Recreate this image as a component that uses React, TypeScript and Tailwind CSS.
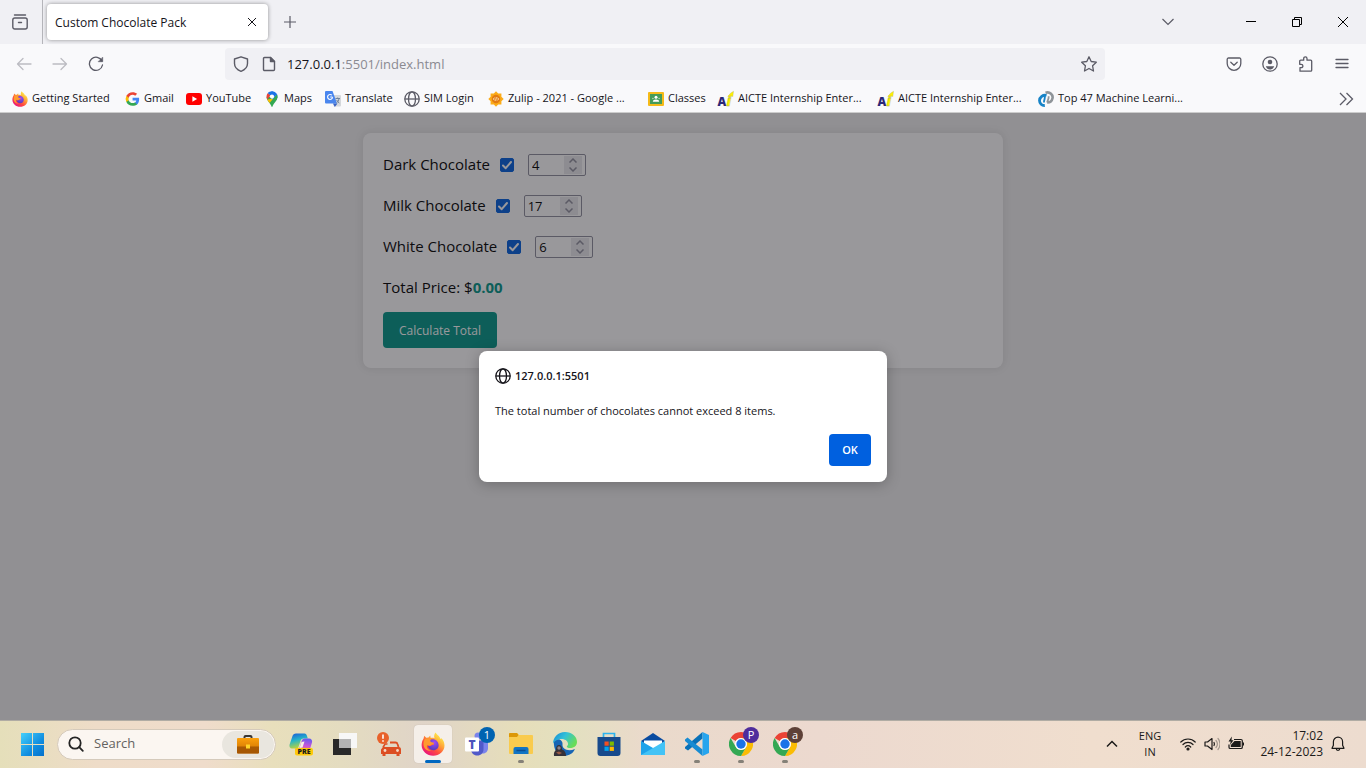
import React, { useId, useState } from "react";

type IconProps = { className?: string };

function FirefoxLogo({ className }: IconProps) {
  const id = useId();
  return (
    <svg viewBox="0 0 24 24" className={className} aria-hidden="true">
      <defs>
        <linearGradient id={id + "a"} x1="0.85" y1="0.1" x2="0.2" y2="0.95">
          <stop offset="0" stopColor="#fff44f" />
          <stop offset="0.35" stopColor="#ffa436" />
          <stop offset="0.65" stopColor="#ff4b3e" />
          <stop offset="1" stopColor="#e8127f" />
        </linearGradient>
        <radialGradient id={id + "b"} cx="0.6" cy="0.3" r="0.8">
          <stop offset="0" stopColor="#a14bf5" />
          <stop offset="1" stopColor="#4a3bb5" />
        </radialGradient>
      </defs>
      <path
        fill={`url(#${id}a)`}
        d="M14.500.500c1 2 3.200 2.800 4.300 4.900.6 1.100.7 1.700.7 1.700l1.100-.9c2 2.200 2.900 4.800 2.900 7.300 0 6-5.100 10.200-11.300 10.200S.6 19.200.6 13c0-3 1.200-5.200 2-6.500l.6-2.700 2 1.900 2.300-.1L9.200 3.500l.5 2.500C11 5.600 12.600 5.800 13.500 6.200 12.800 4 13.300 1.800 14.500.5z"
      />
      <path fill={`url(#${id}b)`} d="M8.300 8.200c2.700-2.200 8.800-.9 9.300 4.500.3 3.200-2.200 5.500-5.200 5.500-3.100 0-5.300-2.200-5.400-4.700 1.200.9 2.900.7 3.700-.3l2.300-.8c.3-.7-.3-1.100-1.100-1.100L9.900 11z" />
      <path fill="#ff9a2e" d="M4 6.900c1.700-.9 3.500-.6 4.600.3l1.600-.2c-.6 1-1.100 1.600-.8 2.600.4.9 2.200.9 3.400 1 .2 1.200-1.200 1.300-2.100 2-1.200 1-2.300 1.600-4.200.5-1.800 1.700.6 5.300 3.800 5.600-4 .9-7.900-2-7.800-6.700C2.500 9.900 3 8.200 4 6.900z" />
    </svg>
  );
}

function ChromeLogo() {
  return (
    <svg viewBox="0 0 24 24" className="size-6" aria-hidden="true">
      <path fill="#ea4335" d="M12 0a12 12 0 0 1 10.400 6H12a6 6 0 0 0-5.200 3L1.600 6A12 12 0 0 1 12 0z" />
      <path fill="#fbbc04" d="M22.400 6A12 12 0 0 1 12 24l5.200-9a6 6 0 0 0 0-6L12 6z" />
      <path fill="#34a853" d="M1.600 6l5.200 9A6 6 0 0 0 17.200 15L12 24A12 12 0 0 1 1.600 6z" />
      <circle cx="12" cy="12" r="6" fill="#fff" />
      <circle cx="12" cy="12" r="4.700" fill="#1a73e8" />
    </svg>
  );
}

function Globe({ className }: IconProps) {
  return (
    <svg viewBox="0 0 16 16" className={className} fill="none" stroke="currentColor" strokeWidth="1.300" aria-hidden="true">
      <circle cx="8" cy="8" r="7.200" />
      <ellipse cx="8" cy="8" rx="3.500" ry="7.200" />
      <path d="M.8 8h14.400" />
    </svg>
  );
}

function GoogleG() {
  return (
    <svg viewBox="-3 -2 28 28" className="size-4" aria-hidden="true">
      <path fill="#4285f4" d="M23.500 12.300c0-.9-.1-1.500-.2-2.300H12v4.500h6.500c-.3 1.600-1.200 3-2.500 3.900v3.100h4c2.300-2.200 3.500-5.300 3.500-9.200z" />
      <path fill="#34a853" d="M12 24c3.200 0 6-1.100 8-2.900l-4-3.100c-1 .7-2.400 1.200-4 1.200-3.100 0-5.800-2.100-6.700-5H1.200v3.200A12 12 0 0 0 12 24z" />
      <path fill="#fbbc05" d="M5.300 14.200a7.200 7.200 0 0 1 0-4.600V6.500H1.200a12 12 0 0 0 0 10.800z" />
      <path fill="#ea4335" d="M12 4.700c1.800 0 3.300.6 4.600 1.800L20 3C18 1.100 15.200 0 12 0 7.300 0 3.200 2.700 1.200 6.500l4.100 3.100c.9-2.800 3.600-4.900 6.700-4.900z" />
    </svg>
  );
}

function YouTubeLogo() {
  return (
    <svg viewBox="0 0 16 16" className="size-4" aria-hidden="true">
      <rect x="0" y="2" width="16" height="12" rx="3" fill="#f00" />
      <path d="M6.400 5.200v5.600l4.700-2.800z" fill="#fff" />
    </svg>
  );
}

function MapsPin() {
  return (
    <svg viewBox="0 0 16 16" className="size-4" aria-hidden="true">
      <path fill="#34a853" d="M8 16c-.5 0-.6-.6-.9-1.400C6.300 12.500 2.500 9.500 2.500 5.800L13.500 5.800C13.500 9.500 9.700 12.500 8.900 14.600 8.600 15.400 8.500 16 8 16z" />
      <path fill="#fbbc04" d="M3.300 8.400 9.800 7.500 5.700 12C4.600 10.600 3.700 9.500 3.300 8.400z" />
      <path fill="#4285f4" d="M7.600 0.100 13 3.300c.4.800.5 1.600.5 2.500L12.600 9 8 8z" />
      <path fill="#34a853" d="M13 3.300c1 2.200.3 4.400-.9 6.100L5.700 12l6-7.200z" />
      <path fill="#1a73e8" d="M3.700 2.200C5.900-.5 10.900-.6 13 3.300L9.500 6 5.500 4z" />
      <path fill="#ea4335" d="M3.700 2.200 6.500 4.500 3.300 8.400C2.100 6.200 2.400 3.600 3.700 2.200z" />
      <circle cx="8" cy="5.600" r="2.100" fill="#fff" />
    </svg>
  );
}

function TranslateLogo() {
  return (
    <svg viewBox="0 0 16 16" className="size-4" aria-hidden="true">
      <path d="M6 4h9a1 1 0 0 1 1 1v9.500a1 1 0 0 1-1 1H9z" fill="#d5d8dc" />
      <path d="M8 12.500h4.500L9.800 16z" fill="#3a62c4" />
      <path d="M1 0h6.500L12 12.500H1a1 1 0 0 1-1-1V1a1 1 0 0 1 1-1z" fill="#4a86ee" />
      <path d="M7.500 6H5.200M6.900 4.200a2.500 2.500 0 1 0 .7 2" stroke="#fff" strokeWidth="1.100" fill="none" />
      <path d="M10.500 7.500h4.500M12.700 6.500v1M14 7.500c-.3 2-1.200 3.500-2.500 4.500M11.700 9c.5 1.300 1.400 2.300 2.600 3" stroke="#71839a" fill="none" />
    </svg>
  );
}

function ZulipLogo() {
  return (
    <svg viewBox="0 0 16 16" className="size-4" aria-hidden="true">
      <path fill="#fbab18" d="m8 .3 2.200 2.300h3.200v3.200L15.700 8l-2.300 2.200v3.200h-3.200L8 15.700l-2.200-2.300H2.600v-3.200L.3 8l2.300-2.200V2.600h3.200z" />
      <circle cx="8" cy="8" r="4.300" fill="#e37b12" />
      <path d="M6.800 6.500 5.300 8l1.500 1.500M9.200 6.500 10.700 8 9.200 9.500M8.400 6.300l-.8 3.400" stroke="#fff3d6" strokeWidth=".8" fill="none" />
    </svg>
  );
}

function ClassroomLogo() {
  return (
    <svg viewBox="0 0 16 16" className="size-4" aria-hidden="true">
      <rect y="1" width="16" height="14" rx="1" fill="#f5ba18" />
      <rect x="2" y="3" width="12" height="10" fill="#459b59" />
      <circle cx="8" cy="6.200" r="1.500" fill="#fff" />
      <path d="M4.800 10.800c0-1.500 1.500-2.300 3.200-2.300s3.200.8 3.200 2.300z" fill="#fff" />
      <circle cx="4.900" cy="7.500" r=".8" fill="#b5d8bd" />
      <circle cx="11.100" cy="7.500" r=".8" fill="#b5d8bd" />
    </svg>
  );
}

function AicteLogo() {
  return (
    <svg viewBox="0 0 16 16" className="size-4 overflow-visible" aria-hidden="true">
      <text x="-0.500" y="15" fontSize="12" fontWeight="800" fill="#2b2777">A</text>
      <text x="8.500" y="15" fontSize="14" fontWeight="800" fontStyle="italic" fill="#f7ee00" stroke="#a9a64a" strokeWidth=".3">i</text>
      <path d="M10 5.500 12.500 2.200 15.500.3 14.800 5.500 12.500 4.700 10.500 6.400z" fill="#fff200" stroke="#b8b566" strokeWidth=".4" />
    </svg>
  );
}

function TopLogo() {
  return (
    <svg viewBox="0 0 16 16" className="size-4" fill="none" aria-hidden="true">
      <path d="M7.500 1.700C12 .3 15.300 3.800 14.500 7.300c-.6 2.800-2.800 4.300-5.300 4.200" stroke="#8e9499" strokeWidth="2.600" />
      <path d="M10.500 5.200c.8 2.300-.8 3.600-1.300 6.300" stroke="#8e9499" strokeWidth="1.800" />
      <path d="M8.500 4.500C5 3.500 1.600 6.300 1.500 9.600c0 3 2.500 5.100 5.300 4.900" stroke="#1683c7" strokeWidth="2.800" />
      <path d="M6.600 5c1 2.500-.8 3.500-.6 6.500" stroke="#1683c7" strokeWidth="1.800" />
    </svg>
  );
}

const bookmarks: { label: string; width: string; icon: React.ReactNode }[] = [
  { label: "Getting Started", width: "w-28", icon: <FirefoxLogo className="size-4" /> },
  { label: "Gmail", width: "w-[62px]", icon: <GoogleG /> },
  { label: "YouTube", width: "w-[78px]", icon: <YouTubeLogo /> },
  { label: "Maps", width: "w-[61px]", icon: <MapsPin /> },
  { label: "Translate", width: "w-[79px]", icon: <TranslateLogo /> },
  { label: "SIM Login", width: "w-[84px]", icon: <Globe className="size-4 text-[#5b5b66]" /> },
  { label: "Zulip - 2021 - Google ...", width: "w-40", icon: <ZulipLogo /> },
  { label: "Classes", width: "w-[70px]", icon: <ClassroomLogo /> },
  { label: "AICTE Internship Enter...", width: "w-40", icon: <AicteLogo /> },
  { label: "AICTE Internship Enter...", width: "w-40", icon: <AicteLogo /> },
  { label: "Top 47 Machine Learni...", width: "w-40", icon: <TopLogo /> },
];

function ToolButton({ label, dim, children }: { label: string; dim?: boolean; children: React.ReactNode }) {
  return (
    <button aria-label={label} className={dim ? "flex h-8 w-9 items-center justify-center text-[#bcbcc2]" : "flex h-8 w-9 items-center justify-center text-[#5b5b66]"}>
      <svg viewBox="0 0 16 16" className="size-4" fill="none" stroke="currentColor" strokeWidth="1.300" strokeLinecap="round" strokeLinejoin="round">
        {children}
      </svg>
    </button>
  );
}

function TabStrip() {
  return (
    <div className="flex h-11 items-center bg-[#f0f0f4]">
      <button aria-label="Recent browsing" className="flex h-11 w-[42px] items-center justify-center pr-0.5 text-[#5b5b66]">
        <svg viewBox="0 0 16 16" className="size-4" fill="none" stroke="currentColor" strokeWidth="1.400" strokeLinecap="round">
          <path d="M2.500 1h11M6.500 8.500h3" />
          <rect x=".8" y="4" width="14.400" height="11" rx="2" />
        </svg>
      </button>
      <div className="h-11 w-px bg-[#b5b5ba]" />
      <div className="ml-1 flex h-9 w-[221px] items-center justify-between rounded bg-white px-2 shadow-[0_0_4px_rgba(0,0,0,0.4)]">
        <span className="pt-0.5 text-[12px] text-[#15141a]">Custom Chocolate Pack</span>
        <button aria-label="Close tab" className="flex size-4 items-center justify-center text-[#15141a]">
          <svg viewBox="0 0 10 10" className="size-2.5" stroke="currentColor" fill="none">
            <path d="m1 1 8 8M9 1 1 9" />
          </svg>
        </button>
      </div>
      <button aria-label="New tab" className="ml-1 flex size-9 items-center justify-center text-[#5b5b66]">
        <svg viewBox="0 0 12 12" className="size-3" stroke="currentColor" strokeWidth="1.200">
          <path d="M6 0v12M0 6h12" />
        </svg>
      </button>
      <div className="flex-1" />
      <button aria-label="List all tabs" className="mr-[42px] flex size-9 items-center justify-center text-[#5b5b66]">
        <svg viewBox="0 0 12 12" className="size-3" fill="none" stroke="currentColor" strokeWidth="1.200">
          <path d="m.5 3 5.500 5.500L11.500 3" />
        </svg>
      </button>
      <div className="flex text-black">
        <button aria-label="Minimize" className="flex h-11 w-[46px] items-center justify-center">
          <svg viewBox="0 0 10 10" className="size-2.5" stroke="currentColor"><path d="M0 4.500h10" /></svg>
        </button>
        <button aria-label="Restore" className="flex h-11 w-[46px] items-center justify-center">
          <svg viewBox="0 0 10 10" className="size-2.5" stroke="currentColor" fill="none"><path d="M.5 2.500h7v7h-7zM2.500 2.500v-2h7v7h-2" /></svg>
        </button>
        <button aria-label="Close window" className="flex h-11 w-[46px] items-center justify-center">
          <svg viewBox="0 0 10 10" className="size-2.5" stroke="currentColor"><path d="m0 0 10 10M10 0 0 10" /></svg>
        </button>
      </div>
    </div>
  );
}

function Toolbar() {
  return (
    <div className="flex h-10 items-center px-1.5">
      <ToolButton label="Back" dim><path d="M15 8H1.500M7 2.500 1.500 8 7 13.500" /></ToolButton>
      <ToolButton label="Forward" dim><path d="M1 8h13.500M9 2.500 14.500 8 9 13.500" /></ToolButton>
      <ToolButton label="Reload">
        <path d="M14 5A6.600 6.600 0 1 0 14.500 9" />
        <path d="M14.700 1.500v4.200h-4.200z" fill="currentColor" strokeWidth=".6" />
      </ToolButton>
      <div className="mx-auto flex h-8 w-full max-w-[880px] items-center rounded bg-[#f0f0f4] px-2 text-[#5b5b66]">
        <svg viewBox="0 0 16 16" className="size-4" fill="none" stroke="currentColor" strokeWidth="1.400" strokeLinejoin="round">
          <path d="M8 .8 14.500 3v4.500c0 3.800-3.200 6.500-6.500 7.800C4.700 14 1.500 11.300 1.500 7.500V3z" />
        </svg>
        <svg viewBox="0 0 16 16" className="ml-3 size-4" fill="none" stroke="currentColor" strokeWidth="1.400" strokeLinejoin="round">
          <path d="M3.500 1.500h6l4 4v8a1 1 0 0 1-1 1h-9a1 1 0 0 1-1-1v-11a1 1 0 0 1 1-1z" />
          <path d="M9.500 1.500v4h4z" fill="currentColor" />
        </svg>
        <a href="http://127.0.0.1:5501/index.html" className="ml-2.5 flex-1 pt-px text-[13px] text-[#8a8a91]">
          <span className="text-[#15141a]">127.0.0.1</span>:5501/index.html
        </a>
        <button aria-label="Bookmark this page">
          <svg viewBox="0 0 16 16" className="size-4" fill="none" stroke="currentColor" strokeWidth="1.300" strokeLinejoin="round">
            <path d="m8 .8 2.200 4.700 5.100.7-3.700 3.600.9 5.200L8 12.500 3.500 15l.9-5.200L.7 6.200l5.100-.7z" />
          </svg>
        </button>
      </div>
      <ToolButton label="Save to Pocket">
        <path d="M2.500 2h11a1.300 1.300 0 0 1 1.300 1.300V7.500a6.800 6.800 0 0 1-13.600 0V3.300A1.300 1.300 0 0 1 2.500 2z" />
        <path d="m4.800 6.300 3.200 3 3.200-3" />
      </ToolButton>
      <ToolButton label="Account">
        <circle cx="8" cy="8" r="7.200" />
        <circle cx="8" cy="6" r="2.300" fill="currentColor" stroke="none" />
        <path d="M3.800 10.200h8.400c-.6 2-2.300 3.300-4.200 3.300s-3.600-1.300-4.200-3.300z" fill="currentColor" stroke="none" />
      </ToolButton>
      <ToolButton label="Extensions">
        <path d="M2 15.200v-3.500h1.200a1.700 1.700 0 0 0 0-3.400H1.700V5.200a1 1 0 0 1 1-1h3V2.500a1.600 1.600 0 0 1 3.300 0v1.700h3.700a1 1 0 0 1 1 1v9a1 1 0 0 1-1 1z" />
      </ToolButton>
      <ToolButton label="Open application menu"><path d="M2 3.500h12M2 7.500h12M2 11.500h12" /></ToolButton>
    </div>
  );
}

function BookmarksBar() {
  return (
    <nav aria-label="Bookmarks" className="flex h-7 items-center overflow-hidden px-3 pt-px">
      {bookmarks.map((b, i) => (
        <a key={i} href="#" className={b.width + " flex shrink-0 items-center gap-1 whitespace-nowrap text-[11px] text-[#15141a]"}>
          {b.icon}
          <span>{b.label}</span>
        </a>
      ))}
      <button aria-label="Show more bookmarks" className="ml-auto text-[#5b5b66]">
        <svg viewBox="0 0 16 16" className="size-4" fill="none" stroke="currentColor" strokeWidth="1.300">
          <path d="m2 2 6 6-6 6M8.500 2l6 6-6 6" />
        </svg>
      </button>
    </nav>
  );
}

function ChocolateRow({ id, name, amount }: { id: string; name: string; amount: number }) {
  const [checked, setChecked] = useState(true);
  const [value, setValue] = useState(amount);
  return (
    <div className="flex h-6 items-center">
      <label htmlFor={id} className="h-6 leading-[22px]">{name}</label>
      <span className="ml-2.5 grid size-3.5">
        <input
          id={id}
          type="checkbox"
          checked={checked}
          onChange={(e) => setChecked(e.target.checked)}
          className="peer col-start-1 row-start-1 size-3.5 appearance-none rounded-xs border border-[#8f8f9d] bg-white checked:border-[#0060df] checked:bg-[#0060df]"
        />
        <svg viewBox="0 0 14 14" className="pointer-events-none col-start-1 row-start-1 hidden size-3.5 peer-checked:block" fill="none" stroke="#fff" strokeWidth="2" strokeLinecap="round" strokeLinejoin="round">
          <path d="m3 7.500 2.700 2.700L11 4" />
        </svg>
      </span>
      <span className="ml-3.5 flex h-[22px] w-[58px] items-center rounded-xs border border-[#8f8f9d] bg-white pr-[3px]">
        <input
          type="number"
          aria-label={name + " quantity"}
          value={value}
          onChange={(e) => setValue(Number(e.target.value))}
          className="w-full min-w-0 flex-1 [appearance:textfield] bg-transparent pt-0.5 pl-[3px] text-[13px] outline-none [&::-webkit-inner-spin-button]:appearance-none"
        />
        <span className="flex h-[18px] w-[18px] flex-col items-center justify-center gap-1 bg-[#e9e9ed] text-[#8f8f9d]">
          <button aria-label={"More " + name} onClick={() => setValue(value + 1)}>
            <svg viewBox="0 0 8 5" className="h-[5px] w-2" fill="none" stroke="currentColor" strokeWidth="1.500"><path d="M.5 4.500 4 1l3.500 3.500" /></svg>
          </button>
          <button aria-label={"Fewer " + name} onClick={() => setValue(value - 1)}>
            <svg viewBox="0 0 8 5" className="h-[5px] w-2" fill="none" stroke="currentColor" strokeWidth="1.500"><path d="M.5.5 4 4 7.500.5" /></svg>
          </button>
        </span>
      </span>
    </div>
  );
}

function Page() {
  return (
    <main className="relative flex-1 bg-[#f0f0f0] p-5">
      <section className="mx-auto flex max-w-[640px] flex-col items-start rounded-lg bg-white p-5 text-[15px] text-black shadow-[0_0_10px_rgba(0,0,0,0.1)]">
        <div className="flex flex-col gap-[17px]">
          <ChocolateRow id="dark" name="Dark Chocolate" amount={4} />
          <ChocolateRow id="milk" name="Milk Chocolate" amount={17} />
          <ChocolateRow id="white" name="White Chocolate" amount={6} />
          <p className="h-6 leading-[22px]">
            Total Price: $<strong className="font-bold text-[#009688]">0.00</strong>
          </p>
        </div>
        <button className="mt-3 h-9 rounded bg-[#009688] px-4 pt-px text-[12px] text-white">Calculate Total</button>
      </section>
      <div className="absolute inset-0 flex items-center justify-center bg-[#1c1b22]/45">
        <div role="alertdialog" aria-labelledby="dialog-origin" aria-describedby="dialog-message" className="flex w-[408px] flex-col rounded-lg bg-white p-4 text-[11px] text-[#15141a] shadow-[0_2px_14px_rgba(0,0,0,0.25)]">
          <h1 id="dialog-origin" className="flex h-[18px] items-center gap-1 font-semibold">
            <Globe className="size-4" />
            127.0.0.1:5501
          </h1>
          <p id="dialog-message" className="mt-[18px] leading-4">The total number of chocolates cannot exceed 8 items.</p>
          <button className="mt-[15px] h-8 w-[42px] self-end rounded bg-[#0060df] pt-px font-semibold text-white">OK</button>
        </div>
      </div>
    </main>
  );
}

function TaskButton({ label, running, active, badge, badgeClass, children }: { label: string; running?: boolean; active?: boolean; badge?: string; badgeClass?: string; children: React.ReactNode }) {
  return (
    <button aria-label={label} className="relative flex h-12 w-11 items-center justify-center">
      <span className={active ? "flex h-[38px] w-[38px] items-center justify-center rounded bg-[#f5efe9] shadow-[0_0_1px_rgba(0,0,0,0.2)]" : "flex items-center justify-center"}>{children}</span>
      {badge && <span className={(badgeClass || "") + " absolute top-[7px] left-6 flex size-4 items-center justify-center rounded-full text-[11px] text-white"}>{badge}</span>}
      {active && <span className="absolute bottom-[5px] left-3.5 h-[3px] w-4 rounded-full bg-[#0067c0]" />}
      {running && <span className="absolute bottom-[5px] left-[19px] h-[3px] w-1.5 rounded-full bg-[#858178]" />}
    </button>
  );
}

function WindowsLogo() {
  const id = useId();
  return (
    <svg viewBox="0 0 23 23" className="size-[23px]" aria-hidden="true">
      <defs>
        <linearGradient id={id} x1="0" y1="0" x2="23" y2="23" gradientUnits="userSpaceOnUse">
          <stop offset="0" stopColor="#45d0fb" />
          <stop offset="0.6" stopColor="#118ee0" />
          <stop offset="1" stopColor="#0470cb" />
        </linearGradient>
      </defs>
      <path fill={`url(#${id})`} d="M0 0h11v11H0zM12 0h11v11H12zM0 12h11v11H0zM12 12h11v11H12z" />
    </svg>
  );
}

function Briefcase() {
  const id = useId();
  return (
    <svg viewBox="0 0 22 19" className="h-[19px] w-[22px]" aria-hidden="true">
      <defs>
        <linearGradient id={id} x1="0" y1="0" x2="0" y2="1">
          <stop offset="0" stopColor="#fba00c" />
          <stop offset="1" stopColor="#c96c02" />
        </linearGradient>
      </defs>
      <path d="M7.500 3.500V2a1 1 0 0 1 1-1h5a1 1 0 0 1 1 1v1.500" stroke="#3a3735" strokeWidth="2" fill="none" />
      <rect y="3" width="22" height="15.500" rx="1" fill={`url(#${id})`} />
      <path d="M0 11.500h22v6a1 1 0 0 1-1 1H1a1 1 0 0 1-1-1z" fill="#9c5002" opacity=".8" />
      <rect x="9" y="9.500" width="4" height="4" fill="#ffd428" />
    </svg>
  );
}

function CopilotLogo() {
  const id = useId();
  return (
    <svg viewBox="0 0 24 24" className="size-6" aria-hidden="true">
      <defs>
        <linearGradient id={id + "a"} x1="0" y1="0" x2="0.300" y2="1">
          <stop offset="0" stopColor="#1b57d8" /><stop offset="0.500" stopColor="#25b5c9" /><stop offset="1" stopColor="#b9d23d" />
        </linearGradient>
        <linearGradient id={id + "b"} x1="0.500" y1="0" x2="0.300" y2="1">
          <stop offset="0" stopColor="#6a5cf0" /><stop offset="0.500" stopColor="#c957d8" /><stop offset="1" stopColor="#f98a5c" />
        </linearGradient>
      </defs>
      <path fill={`url(#${id}a)`} d="M7 1.500h8.500c1.500 0 2 1 2.500 2.500l.8 2.500h-4c-2 0-3 1-3.500 3L9.500 15c-.3 1-1 1.500-2 1.500H3c-2 0-3-2-2.400-4L3.500 4C4 2.500 5.200 1.500 7 1.500z" />
      <path fill={`url(#${id}b)`} d="M15.500 6.500H20c2.300 0 3.600 1.700 3 4l-2 6.500c-.6 2-1.600 3-3.500 3H9c-1.600 0-2.500-1-2.800-3.500h2c1.500 0 2.300-.8 2.700-2l1.800-5.500c.5-1.500 1.300-2.500 2.800-2.500z" />
      <path d="m12.500 10 3-.5-2 6-3 .5z" fill="#f7eee7" />
      <rect x="6" y="16" width="18" height="7.500" rx="2" fill="#ffca0a" />
      <text x="15" y="22.200" textAnchor="middle" fontSize="7" fontWeight="800" fill="#1b1b1b">PRE</text>
    </svg>
  );
}

function Taskbar() {
  const id = useId();
  return (
    <footer className="flex h-12 items-center justify-between bg-[linear-gradient(90deg,#e5dfba_0%,#eedcc8_7%,#efdccb_15%,#e8dfbc_20%,#e4dcc0_25%,#e0d4c8_31%,#e6deba_38%,#e3e0c0_42%,#eadacb_47%,#ecd9cf_60%,#f0dece_80%,#eddccf_100%)] shadow-[inset_0_1px_0_#b0aca4]">
      <div className="flex items-center gap-[3px] pl-2.5">
        <TaskButton label="Start"><WindowsLogo /></TaskButton>
        <div className="flex h-[31px] w-[219px] items-center rounded-full border border-[#d5cabb] bg-[#fbf6f1] pr-px pl-2.5">
          <svg viewBox="0 0 16 16" className="size-4" fill="none" stroke="#242424" strokeWidth="1.800" strokeLinecap="round" aria-hidden="true">
            <circle cx="7" cy="7" r="5.700" /><path d="m11.200 11.200 3.600 3.600" />
          </svg>
          <input aria-label="Search" placeholder="Search" className="ml-2.5 w-0 min-w-0 flex-1 bg-transparent text-[13px] outline-none placeholder:text-[#646260]" />
          <span className="flex h-[27px] w-[52px] items-center justify-center rounded-full bg-[#e9e6df]"><Briefcase /></span>
        </div>
        <div className="flex">
          <TaskButton label="Copilot"><CopilotLogo /></TaskButton>
          <TaskButton label="Task view">
            <svg viewBox="0 0 24 24" className="size-6">
              <rect x="6" y="1" width="18" height="15" fill="#f7f7f7" />
              <rect x="0" y="7" width="18" height="16" fill="#292929" />
              <rect x="6" y="7" width="12" height="9" fill="#b4b4b4" />
            </svg>
          </TaskButton>
          <TaskButton label="Traffic">
            <svg viewBox="0 0 24 24" className="size-6">
              <circle cx="6" cy="6" r="6" fill="#e8612a" />
              <path d="M6 2.500v4.300M6 8.300v1.500" stroke="#fff" strokeWidth="1.600" />
              <path d="M13 10.500h5.500c1 0 1.700.4 2 1.500l1 3" stroke="#dc4e23" strokeWidth="1.800" fill="none" />
              <path fill="#dc4e23" d="M4 17.500 6 15h16c1.300 0 2 1 2 2.300V22h-1.500v2h-3v-2H8.500v2h-3v-2H4z" />
              <path d="m6 15.500 2-3.500h2.500" stroke="#dc4e23" strokeWidth="1.600" fill="none" />
              <circle cx="8" cy="18.500" r="1.400" fill="#f6d8c6" /><circle cx="20.500" cy="18.500" r="1.400" fill="#f6d8c6" />
            </svg>
          </TaskButton>
          <TaskButton label="Firefox" active><FirefoxLogo className="size-6" /></TaskButton>
          <TaskButton label="Teams" badge="1" badgeClass="bg-[#0063b1]">
            <svg viewBox="0 0 24 24" className="size-6">
              <circle cx="13" cy="4" r="3.500" fill="#7b83eb" />
              <path d="M14 9h9v7c0 3-2 5.500-5 5.500S14 19 14 16z" fill="#7b83eb" />
              <path d="M6 8.500h12.500v8.500c0 4-2.500 6.500-6.200 6.500S6 21 6 17z" fill="#5059c9" />
              <rect y="5.500" width="14" height="14" rx="1" fill="#fff" />
              <text x="7" y="17" textAnchor="middle" fontSize="12" fontWeight="800" fill="#4b53bc">T</text>
            </svg>
          </TaskButton>
          <TaskButton label="File Explorer" running>
            <svg viewBox="0 0 24 24" className="size-6">
              <path d="M0 2a1 1 0 0 1 1-1h7l2 2h13a1 1 0 0 1 1 1v17a1 1 0 0 1-1 1H1a1 1 0 0 1-1-1z" fill="#f9cb4e" />
              <path d="M0 2a1 1 0 0 1 1-1h7l1.500 2L8 5H0z" fill="#dc9707" />
              <path d="M4.500 22v-5a2 2 0 0 1 2-2h11a2 2 0 0 1 2 2v5z" fill="#1275c4" />
              <path d="M7.500 18.500h9" stroke="#0b4d92" strokeWidth="1.500" />
            </svg>
          </TaskButton>
          <TaskButton label="Edge">
            <svg viewBox="0 0 24 24" className="size-6">
              <defs>
                <linearGradient id={id + "e"} x1="0" y1="0" x2="1" y2="0.500">
                  <stop offset="0" stopColor="#1387d6" /><stop offset="0.500" stopColor="#33c1d8" /><stop offset="1" stopColor="#67dd57" />
                </linearGradient>
              </defs>
              <path fill="#1665b4" d="M1 9c5-4 9 0 8.500 3.500C9 17 15 20 22 17c-2 4.500-6 6.800-10.500 6.800C5 23.800 0 18 1 9z" />
              <path fill={`url(#${id}e)`} d="M0 12C0 5 5 0 12 0c7 0 12 4.500 12 10 0 4.500-4 6-7 6-2 0-3.500-1-3.200-1.600.7-1 1.400-1.500 1.200-3C14.600 8.500 11.500 7 8.500 7 4 7 1 9.500 0 12z" />
              <path d="M1 24c-.5-3 .5-5 2-6 0-3.500 1-5 3-5s3.200 1.500 3 4.500c2.500.8 4 3 4 6.500z" fill="#35323a" />
              <circle cx="6" cy="16" r="1.700" fill="#8b8288" />
              <path d="m3 20.500 3-1 3 1.500-3 1.500z" fill="#9a5b45" />
            </svg>
          </TaskButton>
          <TaskButton label="Microsoft Store">
            <svg viewBox="0 0 24 24" className="size-6">
              <path d="M6.500 6V1.500h11V6" stroke="#2bb3ee" strokeWidth="1.700" fill="none" />
              <path d="M.5 5h23v16a3 3 0 0 1-3 3h-17a3 3 0 0 1-3-3z" fill="#174a8c" />
              <path d="M7.500 9.500h4.200v4.200H7.500z" fill="#f25022" /><path d="M12.700 9.500h4.200v4.200h-4.200z" fill="#7fba00" />
              <path d="M7.500 14.700h4.200v4.200H7.500z" fill="#00a4ef" /><path d="M12.700 14.700h4.200v4.200h-4.200z" fill="#ffb900" />
            </svg>
          </TaskButton>
          <TaskButton label="Mail">
            <svg viewBox="0 0 24 24" className="size-6">
              <path d="M0 9 12 1l12 8-12 9z" fill="#0a4ba0" />
              <path d="M3 8.500h18V13l-9 6-9-6z" fill="#fff" />
              <path d="M0 9 24 23H0z" fill="#1fa3ea" /><path d="M24 9v14H0z" fill="#43c3f6" />
            </svg>
          </TaskButton>
          <TaskButton label="Visual Studio Code" running>
            <svg viewBox="0 0 24 24" className="size-6">
              <path d="M17.500 0v6.500L3 18.500 0 16.500V15z" fill="#0971b8" />
              <path d="M0 7.500 2.500 5.500 17.500 17.500V24L0 9z" fill="#188bd2" />
              <path d="M17.500 0 24 3v18l-6.500 3z" fill="#27a5ee" />
            </svg>
          </TaskButton>
          <TaskButton label="Chrome profile P" running badge="P" badgeClass="bg-[#4f2d9c]"><ChromeLogo /></TaskButton>
          <TaskButton label="Chrome profile a" running badge="a" badgeClass="bg-[#5d4037]"><ChromeLogo /></TaskButton>
        </div>
      </div>
      <div className="flex items-center pr-[21px] text-[12px] leading-4 text-[#1b1a19]">
        <button aria-label="Show hidden icons" className="mr-5">
          <svg viewBox="0 0 12 12" className="size-3" fill="none" stroke="currentColor" strokeWidth="1.500"><path d="m1 8.500 5-5 5 5" /></svg>
        </button>
        <button className="mr-[18px] w-6 text-center text-[11px]">ENG<br />IN</button>
        <button aria-label="Network, volume and battery" className="mr-4 flex items-center gap-2">
          <svg viewBox="0 0 16 16" className="size-4" fill="none" stroke="currentColor" strokeWidth="1.200" strokeLinecap="round">
            <path d="M.8 6a10.200 10.200 0 0 1 14.400 0M3 8.500a7 7 0 0 1 10 0M5.300 11a3.900 3.900 0 0 1 5.400 0" /><circle cx="8" cy="13" r="1" fill="currentColor" />
          </svg>
          <svg viewBox="0 0 16 16" className="size-4" fill="none" stroke="currentColor" strokeWidth="1.200" strokeLinecap="round" strokeLinejoin="round">
            <path d="M1 6v4h2.500L8 13.500v-11L3.500 6zM10 6.500a3 3 0 0 1 0 3" /><path d="M12 4.500a5.500 5.500 0 0 1 0 7M14 2.500a8.500 8.500 0 0 1 0 11" opacity=".35" />
          </svg>
          <svg viewBox="0 0 16 16" className="size-4" fill="none" stroke="currentColor" strokeWidth="1.200">
            <path d="M6 3.500h7a1.300 1.300 0 0 1 1.300 1.300v6.400a1.300 1.300 0 0 1-1.300 1.300H2.300A1.300 1.300 0 0 1 1 11.200V8.500" /><path d="M15.500 6.500v3" />
            <path d="M6.500 5h6.200v6H2.800V9z" fill="currentColor" stroke="none" /><path d="M3.800.5.500 5.500h2.200L2 9l3.500-4.800H3.500z" fill="currentColor" stroke="none" />
          </svg>
        </button>
        <time className="w-[63px] text-right whitespace-nowrap">17:02<br />24-12-2023</time>
        <button aria-label="Notifications" className="ml-2">
          <svg viewBox="0 0 14 16" className="h-4 w-3.5" fill="none" stroke="currentColor" strokeWidth="1.200" strokeLinejoin="round">
            <path d="M7 1.200a4.600 4.600 0 0 1 4.600 4.600v3.500l1.400 3H1l1.400-3V5.800A4.600 4.600 0 0 1 7 1.200zM5.200 12.500a1.800 1.800 0 0 0 3.600 0" />
          </svg>
        </button>
      </div>
    </footer>
  );
}

export default function App() {
  return (
    <div className="flex min-h-screen flex-col font-['Open_Sans','Noto_Sans',sans-serif]">
      <header className="border-b border-[#cccccc] bg-[#f9f9fb]">
        <TabStrip />
        <Toolbar />
        <BookmarksBar />
      </header>
      <Page />
      <Taskbar />
    </div>
  );
}
